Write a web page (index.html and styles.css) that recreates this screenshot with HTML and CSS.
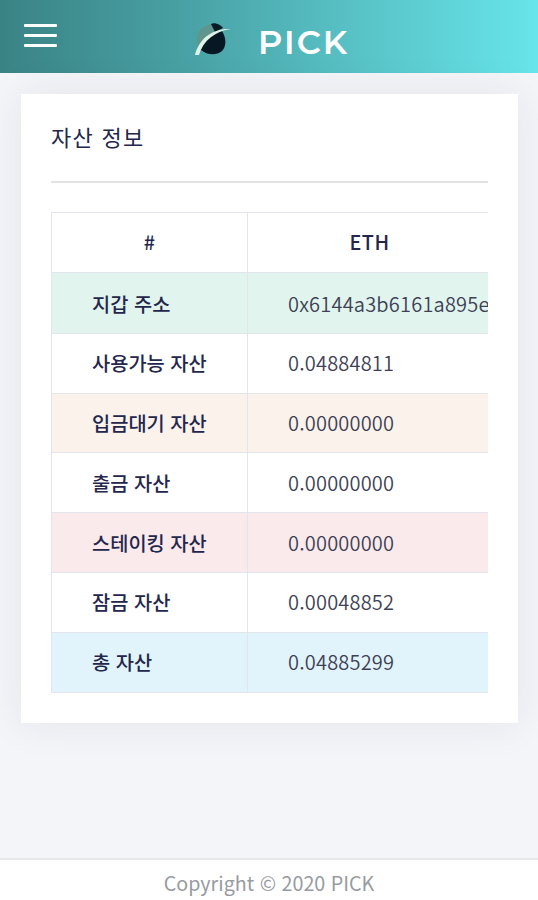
FILE: index.html
```html
<!DOCTYPE html>
<html lang="ko">
<head>
  <meta charset="UTF-8" />
  <meta name="viewport" content="width=device-width, initial-scale=1.0" />
  <title>PICK</title>
  <link rel="stylesheet" href="styles.css">
</head>
<body>
  <header class="topbar">
    <button type="button" class="menu-btn" aria-label="menu">
      <span></span><span></span><span></span>
    </button>
    <a href="#" class="brand">
      <svg class="brand-mark" width="40" height="36" viewBox="0 0 40 36">
        <path d="M3 26 C-1 14 6 5 18 4 L25 8 L14 22 L4 31 Z" fill="#60958e"/>
        <path d="M16 4 C20 2 26 5 28 8 L20 12 Z" fill="#071c25"/>
        <path d="M27 11 C32 19 31 27 27 31 C21 36 12 35 6 30 C9 20 16 12 27 11 Z" fill="#071724"/>
        <path d="M0 35 C4 19 17 8 36 9 C21 11 8 20 4 35 Z" fill="#e0f2e8"/>
      </svg>
      <span class="brand-name">PICK</span>
    </a>
  </header>

  <main class="content">
    <section class="card">
      <h1 class="card-title">자산 정보</h1>
      <div class="table-wrap">
        <table class="asset-table">
          <thead>
            <tr><th>#</th><th>ETH</th></tr>
          </thead>
          <tbody>
            <tr class="success"><th>지갑 주소</th><td>0x6144a3b6161a895e</td></tr>
            <tr><th>사용가능 자산</th><td>0.04884811</td></tr>
            <tr class="warning"><th>입금대기 자산</th><td>0.00000000</td></tr>
            <tr><th>출금 자산</th><td>0.00000000</td></tr>
            <tr class="danger"><th>스테이킹 자산</th><td>0.00000000</td></tr>
            <tr><th>잠금 자산</th><td>0.00048852</td></tr>
            <tr class="info"><th>총 자산</th><td>0.04885299</td></tr>
          </tbody>
        </table>
      </div>
    </section>
  </main>

  <footer class="footer">Copyright © 2020 PICK</footer>
</body>
</html>
```

FILE: styles.css
```css
* { box-sizing: border-box; }
body, html {
  margin: 0; padding: 0; height: 100%;
}
body {
  display: flex; flex-direction: column;
  background: #f4f5f9; color: #3e4155; overflow: hidden;
  font-family: "Noto Sans CJK KR", sans-serif; font-size: 19.8px;
}

/* header */
.topbar {
  display: flex; align-items: flex-start; flex: none;
  height: 73px; padding: 0 24px;
  background: linear-gradient(90deg, #3a8385 0%, #48a0a3 33%, #58c2c6 66%, #67e5ea 100%);
}
.menu-btn {
  display: flex; flex-direction: column; gap: 7px;
  width: 33px; margin-top: 24px; padding: 0;
  border: none; background: none; cursor: pointer;
}
.menu-btn span {
  height: 3px; width: 100%; border-radius: 1px; background: #fff;
}
.brand {
  display: flex; margin: 20px 0 0 138px;
  color: #fff; text-decoration: none;
}
.brand-name {
  margin: 2px 0 0 23px;
  font-family: Montserrat, Lato, sans-serif; font-size: 33.5px; font-weight: 600;
  line-height: 40px; letter-spacing: 2px;
}

/* card */
.content { flex: 1; padding: 21px 20px 0 21px; }
.card {
  height: 629px; padding: 0 30px;
  background: #fff; box-shadow: 0 0 40px rgba(40, 40, 50, 0.08);
}
.card-title {
  height: 89px; margin: 0 0 29px; padding-top: 26px;
  border-bottom: 2px solid #e1e2e5;
  color: #24264c; font-size: 22px; font-weight: 400;
  line-height: 32px; letter-spacing: 1.3px;
}
.table-wrap { overflow: hidden; }
.asset-table {
  width: 440px; table-layout: fixed;
  border-collapse: collapse;
}
.asset-table th, .asset-table td {
  height: 59.8px; padding: 0 40px;
  border: 1px solid #e2e5ec;
  line-height: 28px; text-align: left; white-space: nowrap;
}
.asset-table th { width: 196px; color: #24264c; font-weight: 500; }
.asset-table td { font-size: 20px; font-weight: 350; letter-spacing: 0.2px; }
.asset-table thead th { text-align: center; }
.asset-table thead th:last-child { width: 244px; letter-spacing: 0.5px; }
.asset-table .success th, .asset-table .success td { height: 61px; padding-top: 2px; }
.success { background: #e1f5ee; }
.warning { background: #fbf2ec; }
.danger { background: #faeaec; }
.info { background: #e2f4fb; }

/* footer */
.footer {
  flex: none; height: 42px; padding-top: 8px;
  border-top: 2px solid #e5e7e9; background: #fff;
  color: #979ba1; font-size: 19.7px; line-height: 30px; text-align: center;
}
```
